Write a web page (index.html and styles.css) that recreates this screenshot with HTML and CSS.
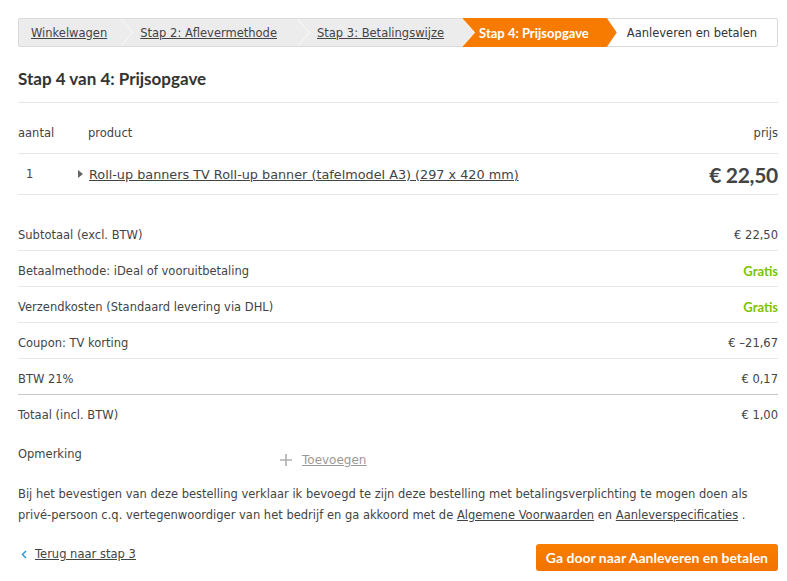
FILE: index.html
```html
<!DOCTYPE html>
<html lang="nl">
<head>
<meta charset="utf-8">
<title>Stap 4 van 4: Prijsopgave</title>
<link rel="stylesheet" href="styles.css">
</head>
<body>
<div class="page">
  <nav class="crumbs">
    <a class="crumb done c1" href="#">Winkelwagen</a>
    <a class="crumb done c2" href="#">Stap 2: Aflevermethode</a>
    <a class="crumb done c3" href="#">Stap 3: Betalingswijze</a>
    <span class="crumb active">Stap 4: Prijsopgave</span>
    <span class="crumb next">Aanleveren en betalen</span>
  </nav>

  <h1 class="title">Stap 4 van 4: Prijsopgave</h1>

  <div class="thead">
    <span class="col-qty">aantal</span>
    <span class="col-prod">product</span>
    <span class="col-price">prijs</span>
  </div>
  <div class="prow">
    <span class="col-qty qty">1</span>
    <span class="col-prod"><span class="tri"></span><a href="#">Roll-up banners TV Roll-up banner (tafelmodel A3) (297 x 420 mm)</a></span>
    <span class="col-price big">€ 22,50</span>
  </div>

  <div class="summary">
    <div class="srow"><span>Subtotaal (excl. BTW)</span><span>€ 22,50</span></div>
    <div class="srow"><span>Betaalmethode: iDeal of vooruitbetaling</span><span class="free">Gratis</span></div>
    <div class="srow"><span>Verzendkosten (Standaard levering via DHL)</span><span class="free">Gratis</span></div>
    <div class="srow"><span>Coupon: TV korting</span><span>€ –21,67</span></div>
    <div class="srow dark"><span>BTW 21%</span><span>€ 0,17</span></div>
    <div class="srow last"><span>Totaal (incl. BTW)</span><span>€ 1,00</span></div>
  </div>

  <div class="remark">
    <span class="remark-label">Opmerking</span>
    <a class="add" href="#"><svg width="12" height="12" viewBox="0 0 12 12"><path d="M6 0v12M0 6h12" stroke="#b0b0b0" stroke-width="1.6" fill="none"/></svg><span>Toevoegen</span></a>
  </div>

  <p class="terms">Bij het bevestigen van deze bestelling verklaar ik bevoegd te zijn deze bestelling met betalingsverplichting te mogen doen als privé-persoon c.q. vertegenwoordiger van het bedrijf en ga akkoord met de <a href="#">Algemene Voorwaarden</a> en <a href="#">Aanleverspecificaties</a> .</p>

  <div class="footer">
    <a class="back" href="#"><svg width="6" height="9" viewBox="0 0 6 9"><path d="M5 1L1.5 4.5L5 8" stroke="#2a9be0" stroke-width="1.5" fill="none"/></svg><span>Terug naar stap 3</span></a>
    <a class="btn" href="#">Ga door naar Aanleveren en betalen</a>
  </div>
</div>
</body>
</html>
```

FILE: styles.css
```css
* { box-sizing: border-box; }
body {
  margin: 0;
  background: #fff;
  color: #444;
  font-family: "DejaVu Sans", "Liberation Sans", sans-serif;
  font-size: 11.5px;
}
a { color: #444; }
.page {
  width: 760px;
  margin: 0 0 0 18px;
  padding-top: 18px;
}

/* breadcrumb */
.crumbs {
  display: flex;
  height: 29px;
  background: #ececec;
  border: 1px solid #dadada;
  border-radius: 2px;
}
.crumb {
  position: relative;
  display: flex;
  align-items: center;
  height: 100%;
  padding: 0 14px 0 12px;
  white-space: nowrap;
}
.crumb.c1 { padding-right: 14px; }
.crumb.c2 { padding-left: 19px; padding-right: 21px; }
.crumb.c3 { padding-left: 19px; padding-right: 19px; }
.crumb::before,
.crumb::after {
  content: "";
  position: absolute;
  top: 0;
  height: 100%;
  width: 12px;
  clip-path: polygon(0 0, 100% 50%, 0 100%);
  z-index: 2;
}
.crumb.done::before { right: -12px; background: #fbfbfb; }
.crumb.done::after { right: -11px; background: #ececec; z-index: 3; }
.crumb.active {
  background: #f77b00;
  color: #fff;
  font-family: Lato, "Open Sans", sans-serif;
  font-weight: 700;
  font-size: 13px;
  padding-left: 16px;
  padding-right: 18px;
  margin-top: -1px;
  height: calc(100% + 2px);
}
.crumb.active::before { display: none; }
.crumb.active::after { right: -10px; width: 10px; background: #f77b00; }
.crumb.next {
  flex: 1;
  background: #fff;
  padding-left: 20px;
  color: #333;
  border-radius: 0 2px 2px 0;
}

/* heading */
.title {
  margin: 22px 0 0;
  padding-bottom: 13px;
  border-bottom: 1px solid #e6e6e6;
  font-family: Lato, "Open Sans", sans-serif;
  font-weight: 700;
  font-size: 17px;
  line-height: 20px;
  color: #333;
}

/* product table */
.thead, .prow {
  display: flex;
  align-items: center;
  border-bottom: 1px solid #e6e6e6;
}
.thead { padding: 23px 0 13px; line-height: 14px; }
.prow { height: 41px; }
.col-qty { width: 70px; }
.col-prod { flex: 1; display: flex; align-items: center; }
.col-price { text-align: right; }
.qty { padding-left: 8px; }
.tri {
  width: 0; height: 0;
  border-left: 5px solid #666;
  border-top: 4px solid transparent;
  border-bottom: 4px solid transparent;
  margin: 0 6px 0 -10px;
}
.col-prod a { font-size: 12.8px; }
.big {
  font-family: Lato, "Open Sans", sans-serif;
  font-weight: 700;
  font-size: 21px;
  color: #444;
  letter-spacing: -0.3px;
}

/* summary */
.summary { margin-top: 20px; }
.srow {
  display: flex;
  justify-content: space-between;
  padding: 13px 0 8px;
  line-height: 14px;
  border-bottom: 1px solid #e8e8e8;
}
.srow.dark { border-bottom-color: #c8c8c8; }
.srow.last { border-bottom: 0; }
.free {
  color: #7cc300;
  font-family: Lato, "Open Sans", sans-serif;
  font-weight: 700;
  font-size: 13px;
}

/* remark */
.remark {
  display: flex;
  align-items: flex-start;
  margin-top: 17px;
  line-height: 14px;
}
.remark-label { width: 262px; }
.add {
  display: flex;
  align-items: center;
  gap: 10px;
  margin-top: 6px;
  color: #999;
  font-size: 12px;
}
.add span { text-decoration: underline; }

/* terms */
.terms {
  margin: 17px 0 0;
  line-height: 21px;
}

/* footer */
.footer {
  display: flex;
  justify-content: space-between;
  align-items: flex-start;
  margin-top: 18px;
}
.back {
  display: flex;
  align-items: center;
  gap: 8px;
  padding: 3px 0 0 3px;
  line-height: 14px;
}
.back span { text-decoration: underline; }
.btn {
  display: block;
  height: 27px;
  line-height: 27px;
  padding: 0 10px;
  border-radius: 3px;
  background: linear-gradient(#f97f00, #f27200);
  color: #fff;
  text-decoration: none;
  font-family: Lato, "Open Sans", sans-serif;
  font-weight: 700;
  font-size: 14px;
}
```
